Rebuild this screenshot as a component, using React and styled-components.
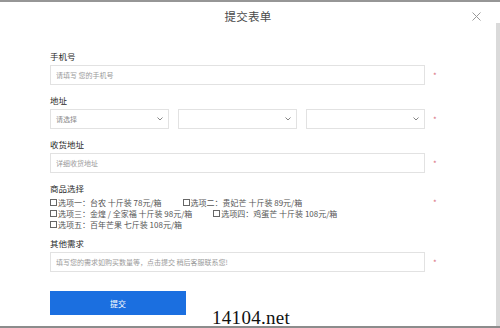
import styled, { createGlobalStyle } from "styled-components"

const options = [
  "选项一：台农 十斤装 78元/箱",
  "选项二：贵妃芒 十斤装 89元/箱",
  "选项三：金煌 / 全家福 十斤装 98元/箱",
  "选项四：鸡蛋芒 十斤装 108元/箱",
  "选项五：百年芒果 七斤装 108元/箱",
]

export default function App() {
  return (
    <Frame>
      <GlobalStyle />
      <Main>
        <Header>
          <Title>提交表单</Title>
          <Close>
            <svg width="9" height="9" viewBox="0 0 9 9">
              <path d="M0.5 0.5 L8.5 8.5 M8.5 0.5 L0.5 8.5" stroke="#9a9a9a" strokeWidth="1" />
            </svg>
          </Close>
        </Header>

        <Form>
          <Field>
            <Label>手机号</Label>
            <Row>
              <Input placeholder="请填写 您的手机号" />
              <Star>*</Star>
            </Row>
          </Field>

          <Field>
            <Label>地址</Label>
            <Row>
              <Selects>
                <Select>
                  <span>请选择</span>
                  <Chevron />
                </Select>
                <Select>
                  <span />
                  <Chevron />
                </Select>
                <Select>
                  <span />
                  <Chevron />
                </Select>
              </Selects>
              <Star>*</Star>
            </Row>
          </Field>

          <Field>
            <Label>收货地址</Label>
            <Row>
              <Input placeholder="详细收货地址" />
              <Star>*</Star>
            </Row>
          </Field>

          <Field $gap={7}>
            <Label>商品选择</Label>
            <Row $top>
              <Options>
                {options.map((o) => (
                  <Option key={o}>
                    <Box />
                    {o}
                  </Option>
                ))}
              </Options>
              <Star $line>*</Star>
            </Row>
          </Field>

          <Field>
            <Label>其他需求</Label>
            <Row>
              <Input placeholder="填写您的需求如购买数量等，点击提交 稍后客服联系您!" />
              <Star>*</Star>
            </Row>
          </Field>

          <Submit>提交</Submit>
        </Form>
      </Main>
      <Scrollbar />
      <Watermark>14104.net</Watermark>
    </Frame>
  )
}

function Chevron() {
  return (
    <svg width="6" height="4" viewBox="0 0 6 4">
      <path d="M0.5 0.5 L3 3 L5.5 0.5" fill="none" stroke="#777" strokeWidth="0.9" />
    </svg>
  )
}

const GlobalStyle = createGlobalStyle`
  html, body {
    margin: 0;
    padding: 0;
    background: #fff;
  }
  body {
    font-family: "Noto Sans CJK SC", "Noto Sans", sans-serif;
  }
`
const Frame = styled.div`
  position: relative;
  width: 500px;
  height: 328px;
  box-sizing: border-box;
  border-top: 2px solid #969696;
  border-bottom: 2px solid #8c8c8c;
  display: flex;
  overflow: hidden;
  background: #fff;
`
const Main = styled.div`
  flex: 1;
  display: flex;
  flex-direction: column;
`
const Header = styled.div`
  height: 28px;
  display: flex;
  align-items: center;
  justify-content: center;
  position: relative;
`
const Title = styled.div`
  font-size: 11.5px;
  color: #4a4a4a;
  letter-spacing: 0.3px;
`
const Close = styled.div`
  position: absolute;
  right: 15px;
  top: 10px;
  display: flex;
`
const Form = styled.div`
  padding: 20px 0 0 50px;
  display: flex;
  flex-direction: column;
`
const Field = styled.div`
  display: flex;
  flex-direction: column;
  margin-bottom: ${(p) => p.$gap ?? 9}px;
`
const Label = styled.div`
  font-size: 8.5px;
  line-height: 12px;
  color: #2a2a2a;
  font-weight: 400;
  margin-bottom: 3px;
`
const Row = styled.div`
  display: flex;
  align-items: ${(p) => (p.$top ? "flex-start" : "center")};
`
const Input = styled.input`
  width: 375px;
  height: 20px;
  box-sizing: border-box;
  border: 1px solid #e2e2e2;
  padding: 0 5px;
  font-family: "Noto Sans CJK SC", "Noto Sans", sans-serif;
  font-size: 7px;
  color: #333;
  outline: none;
  &::placeholder {
    color: #9a9a9a;
  }
`
const Selects = styled.div`
  width: 375px;
  display: flex;
  gap: 9px;
`
const Select = styled.div`
  flex: 1;
  height: 20px;
  box-sizing: border-box;
  border: 1px solid #e2e2e2;
  padding: 0 5px;
  display: flex;
  align-items: center;
  justify-content: space-between;
  font-size: 7px;
  color: #8a8a8a;
`
const Star = styled.span`
  margin-left: 8px;
  font-size: 8px;
  color: #d96f80;
  line-height: ${(p) => (p.$line ? "11px" : "normal")};
`
const Options = styled.div`
  width: 375px;
  display: flex;
  flex-wrap: wrap;
  column-gap: 21px;
`
const Option = styled.label`
  display: flex;
  align-items: center;
  font-size: 8px;
  line-height: 11px;
  color: #555;
  white-space: nowrap;
`
const Box = styled.span`
  width: 7px;
  height: 7px;
  box-sizing: border-box;
  border: 1px solid #666;
  margin-right: 1px;
`
const Submit = styled.button`
  margin-top: 10px;
  width: 136px;
  height: 24px;
  border: none;
  background: #1b6fe0;
  color: #fff;
  font-family: "Noto Sans CJK SC", "Noto Sans", sans-serif;
  font-size: 8px;
  padding: 0;
`
const Scrollbar = styled.div`
  width: 4px;
  margin-top: 21px;
  background: #dadada;
`
const Watermark = styled.div`
  position: absolute;
  left: 212px;
  top: 306px;
  font-family: "Liberation Serif", serif;
  font-size: 19px;
  line-height: 20px;
  color: #111;
  letter-spacing: 0.3px;
`
